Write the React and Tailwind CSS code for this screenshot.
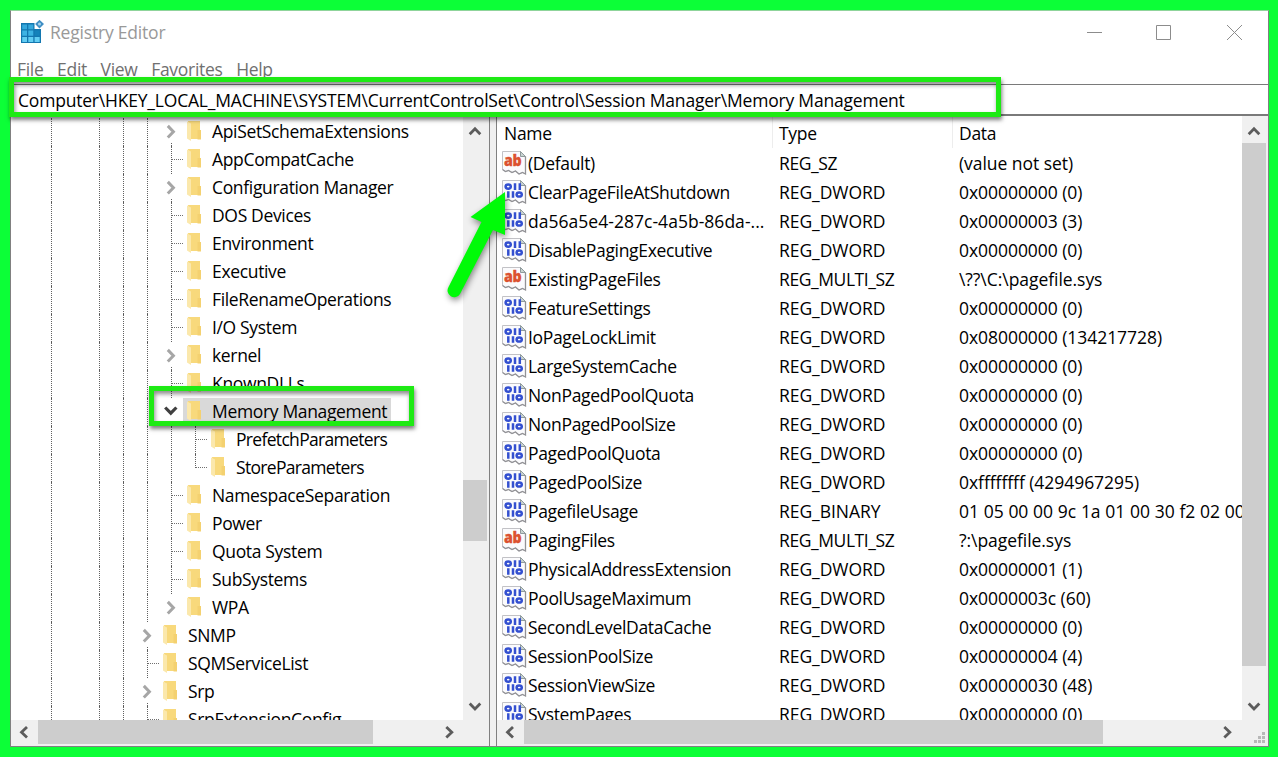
import React from 'react';

const TREE = [
  { name: 'ApiSetSchemaExtensions', level: 5, arrow: 'closed' },
  { name: 'AppCompatCache', level: 5 },
  { name: 'Configuration Manager', level: 5, arrow: 'closed' },
  { name: 'DOS Devices', level: 5 },
  { name: 'Environment', level: 5 },
  { name: 'Executive', level: 5 },
  { name: 'FileRenameOperations', level: 5 },
  { name: 'I/O System', level: 5 },
  { name: 'kernel', level: 5, arrow: 'closed' },
  { name: 'KnownDLLs', level: 5 },
  { name: 'Memory Management', level: 5, arrow: 'open', selected: true },
  { name: 'PrefetchParameters', level: 6 },
  { name: 'StoreParameters', level: 6, last: true },
  { name: 'NamespaceSeparation', level: 5 },
  { name: 'Power', level: 5 },
  { name: 'Quota System', level: 5 },
  { name: 'SubSystems', level: 5 },
  { name: 'WPA', level: 5, arrow: 'closed', last: true },
  { name: 'SNMP', level: 4, arrow: 'closed' },
  { name: 'SQMServiceList', level: 4 },
  { name: 'Srp', level: 4, arrow: 'closed' },
  { name: 'SrpExtensionConfig', level: 4 },
];

const VALUES = [
  ['(Default)', 'REG_SZ', '(value not set)'],
  ['ClearPageFileAtShutdown', 'REG_DWORD', '0x00000000 (0)'],
  ['da56a5e4-287c-4a5b-86da-...', 'REG_DWORD', '0x00000003 (3)'],
  ['DisablePagingExecutive', 'REG_DWORD', '0x00000000 (0)'],
  ['ExistingPageFiles', 'REG_MULTI_SZ', '\\??\\C:\\pagefile.sys'],
  ['FeatureSettings', 'REG_DWORD', '0x00000000 (0)'],
  ['IoPageLockLimit', 'REG_DWORD', '0x08000000 (134217728)'],
  ['LargeSystemCache', 'REG_DWORD', '0x00000000 (0)'],
  ['NonPagedPoolQuota', 'REG_DWORD', '0x00000000 (0)'],
  ['NonPagedPoolSize', 'REG_DWORD', '0x00000000 (0)'],
  ['PagedPoolQuota', 'REG_DWORD', '0x00000000 (0)'],
  ['PagedPoolSize', 'REG_DWORD', '0xffffffff (4294967295)'],
  ['PagefileUsage', 'REG_BINARY', '01 05 00 00 9c 1a 01 00 30 f2 02 00'],
  ['PagingFiles', 'REG_MULTI_SZ', '?:\\pagefile.sys'],
  ['PhysicalAddressExtension', 'REG_DWORD', '0x00000001 (1)'],
  ['PoolUsageMaximum', 'REG_DWORD', '0x0000003c (60)'],
  ['SecondLevelDataCache', 'REG_DWORD', '0x00000000 (0)'],
  ['SessionPoolSize', 'REG_DWORD', '0x00000004 (4)'],
  ['SessionViewSize', 'REG_DWORD', '0x00000030 (48)'],
  ['SystemPages', 'REG_DWORD', '0x00000000 (0)'],
];

const MENU = ['File', 'Edit', 'View', 'Favorites', 'Help'];

const FolderIcon = () => (
  <svg width="16" height="22" viewBox="0 0 16 22" className="shrink-0">
    <path d="M1 1H13V19H3Z" fill="#f8d97c" />
    <path d="M10.5 10H14V19.5H10.5Z" fill="#f4d170" />
    <path d="M0 1.5L4 3.5V21L0 18.5Z" fill="#fbe8ac" />
  </svg>
);

const AppIcon = () => (
  <svg width="24" height="26" viewBox="0 0 24 26">
    <path d="M1 3H14.5V9H21V23H1Z" fill="#1377b0" />
    <path d="M2.2 4.5H7V9.3H2.2ZM8.3 4.5H13.3V9.3H8.3Z" fill="#35a8dc" />
    <path d="M2.2 10.5H7V15.7H2.2ZM8.3 10.5H13.3V15.7H8.3Z" fill="#3db3e4" />
    <path d="M14.6 10.5H19.7V15.7H14.6Z" fill="#1482bb" />
    <path d="M2.2 17H7V22H2.2ZM8.3 17H13.3V22H8.3ZM14.6 17H19.7V22H14.6Z" fill="#62cdf3" />
    <path d="M19.5 -0.2L24 4.1L19.5 8.4L15.1 4.1Z" fill="#3f8ec4" />
    <circle cx="19.5" cy="4.1" r="1.5" fill="#a6d4ee" />
  </svg>
);

const ValueIcon = ({ text }) => (
  <svg width="26" height="26" viewBox="0 0 26 26" className="shrink-0">
    <path
      d="M0.5 1.5H18.5L23.5 6.5V24L20.5 22.5L17 24L13.5 21L10 22.5L6.5 20.5L3.5 21.5L0.5 19.5Z"
      fill="#fbfbfd"
      stroke="#c2c2c6"
      strokeWidth="1"
    />
    <path d="M18.5 1.5V6.5H23.5Z" fill="#c9d3d2" stroke="#8f9a9c" strokeWidth="1" />
    <path
      d="M23.5 6.5V24L20.5 22.5L17 24L13.5 21L10 22.5L6.5 20.5L3.5 21.5L0.5 19.5"
      fill="none"
      stroke="#929296"
      strokeWidth="1.3"
    />
    {text ? (
      <text
        x="2"
        y="15.7"
        textLength="17.5"
        lengthAdjust="spacingAndGlyphs"
        fontSize="16"
        fontWeight="800"
        fontFamily="Open Sans, sans-serif"
        fill="#dc5230"
        stroke="#dc5230"
        strokeWidth="0.3"
      >
        ab
      </text>
    ) : (
      <g fill="none" stroke="#3450d0" strokeWidth="2.5">
        <ellipse cx="6.2" cy="7.6" rx="2.6" ry="2.1" />
        <path d="M13 4.3V10.9M17.8 4.3V10.9" />
        <path d="M6.3 12.2V18.8M11 12.2V18.8" />
        <ellipse cx="17.2" cy="15.5" rx="2.6" ry="2.1" />
      </g>
    )}
  </svg>
);

const Chevron = ({ dir }) => {
  const paths = {
    up: 'M6.7 15.3L12 9.8L17.3 15.3',
    down: 'M6.7 9.5L12 15L17.3 9.5',
    left: 'M16 6.9L10.5 12.2L16 17.5',
    right: 'M9.3 6.9L14.8 12.2L9.3 17.5',
  };
  return (
    <svg width="24" height="24" viewBox="0 0 24 24" className="shrink-0">
      <path d={paths[dir]} fill="none" stroke="#5c5c5c" strokeWidth="2.8" />
    </svg>
  );
};

// One 24px wide column of the tree's dotted guides
const Guide = ({ branch, half }) => (
  <div className="w-6 shrink-0 pl-3">
    <div className={`border-l border-dotted border-[#606060] ${half ? 'h-[14px]' : 'h-7'}`}>
      {branch && (
        <div className="pt-[13px]">
          <div className="w-[11px] border-t border-dotted border-[#707070]" />
        </div>
      )}
    </div>
  </div>
);

const Expander = ({ open, last }) => (
  <div className="h-7 w-6 shrink-0">
    <svg width="24" height="25" viewBox="0 0 24 25" className="block">
      {open ? (
        <path d="M6.2 9.5L11.8 15.2L17.4 9.5" fill="none" stroke="#404040" strokeWidth="3.2" />
      ) : (
        <path d="M8.8 7.9L14.4 13.7L8.8 19.5" fill="none" stroke="#a6a6a6" strokeWidth="3" />
      )}
    </svg>
    {!last && <div className="ml-3 h-[3px] border-l border-dotted border-[#606060]" />}
  </div>
);

const TreeRow = ({ item }) => (
  <div className="flex h-7 shrink-0 pl-7">
    <Guide />
    <div className="w-6 shrink-0" />
    <Guide />
    <Guide />
    {item.level > 4 && <Guide />}
    {item.level > 5 && <Guide />}
    {item.arrow ? (
      <Expander open={item.arrow === 'open'} last={item.last} />
    ) : (
      <Guide branch half={item.last} />
    )}
    <div className={`flex h-7 items-center pr-1 ${item.selected ? 'bg-[#d9d9d9]' : ''}`}>
      <div className="flex w-[29px] shrink-0 pb-[2px] pl-1">
        <FolderIcon />
      </div>
      <span className={`-mt-0.5 whitespace-pre ${item.level > 5 ? 'tracking-[-0.68px]' : 'tracking-[-0.34px]'}`}>
        {item.name}
      </span>
    </div>
  </div>
);

const ValueRow = ({ value }) => {
  const [name, type, data] = value;
  const isText = type === 'REG_SZ' || type === 'REG_MULTI_SZ';
  return (
    <div className="flex h-[29px] shrink-0 items-center whitespace-pre">
      <div className="flex w-[282px] shrink-0 items-center pl-[5px]">
        <ValueIcon text={isText} />
        <span className={name.includes('-') ? 'tracking-[0.03px]' : 'tracking-[-0.33px]'}>{name}</span>
      </div>
      <div className={`w-[180px] shrink-0 ${isText ? 'tracking-[-0.42px]' : 'tracking-[-0.05px]'}`}>{type}</div>
      <div className={type === 'REG_BINARY' ? 'tracking-[-0.05px] [word-spacing:0.3px]' : 'tracking-[-0.05px]'}>{data}</div>
    </div>
  );
};

export default function App() {
  return (
    <div className="relative h-[757px] w-[1278px] overflow-hidden bg-[#0cff37] p-[10px] font-['Open_Sans',sans-serif] text-[17.5px] leading-7 tracking-[-0.3px] text-black">
      <div className="flex h-[737px] w-[1259px] flex-col border border-[#808080] border-t-[#8fd49b] bg-white">
        <div className="flex h-[44px] shrink-0 items-center pl-[9px]">
          <AppIcon />
          <span className="-mt-0.5 ml-[6px] tracking-[-0.2px] text-[#999]">Registry Editor</span>
          <svg width="160" height="20" viewBox="0 0 160 20" className="ml-auto mr-[23px]" fill="none" stroke="#8c8c8c">
            <path d="M2 9.5H17" />
            <path d="M71.5 2.5H85.5V16.5H71.5Z" />
            <path d="M142 2L157 17M157 2L142 17" />
          </svg>
        </div>
        <div className="flex h-[29px] shrink-0 gap-[13.6px] pl-[6px] text-[#707070]">
          {MENU.map((m) => (
            <span key={m}>{m}</span>
          ))}
        </div>
        <div className="flex h-8 shrink-0 items-center border-b-2 border-t border-[#7a7a7a] pl-[7px] tracking-[-0.2px]">
          Computer\HKEY_LOCAL_MACHINE\SYSTEM\CurrentControlSet\Control\Session Manager\Memory Management
        </div>

        <div className="flex min-h-0 flex-1 bg-[#f0f0f0]">
          <div className="flex w-[479px] shrink-0 flex-col border-r border-[#808080]">
            <div className="flex h-[604px]">
              <div className="flex w-[452px] flex-col overflow-hidden bg-white pt-[2px]">
                {TREE.map((item) => (
                  <TreeRow key={item.name} item={item} />
                ))}
              </div>
              <div className="flex w-6 flex-col pb-[2px] pt-[3px]">
                <Chevron dir="up" />
                <div className="mt-[337px] h-[61px] bg-[#cdcdcd]" />
                <div className="mt-auto">
                  <Chevron dir="down" />
                </div>
              </div>
            </div>
            <div className="flex h-6 items-center">
              <Chevron dir="left" />
              <div className="ml-[3px] h-6 w-[335px] bg-[#cdcdcd]" />
              <div className="ml-auto mr-[28px]">
                <Chevron dir="right" />
              </div>
            </div>
          </div>

          <div className="ml-[6px] flex flex-1 flex-col border-l border-[#808080]">
            <div className="flex h-[604px]">
              <div className="w-[745px] shrink-0 overflow-hidden bg-white">
                <div className="flex h-8 items-center">
                  <div className="h-full w-[276px] border-r border-[#ededed] pl-[7px] pt-[3px]">Name</div>
                  <div className="h-full w-[180px] border-r border-[#ededed] pl-[6px] pt-[3px]">Type</div>
                  <div className="h-full pl-[6px] pt-[3px]">Data</div>
                </div>
                {VALUES.map((v) => (
                  <ValueRow key={v[0]} value={v} />
                ))}
              </div>
              <div className="flex w-6 flex-col pb-[2px] pt-[3px]">
                <Chevron dir="up" />
                <div className="h-[523px] bg-[#cdcdcd]" />
                <div className="mt-auto">
                  <Chevron dir="down" />
                </div>
              </div>
            </div>
            <div className="flex h-6 items-center">
              <Chevron dir="left" />
              <div className="ml-[3px] h-6 w-[579px] bg-[#cdcdcd]" />
              <div className="ml-auto mr-[5px]">
                <Chevron dir="right" />
              </div>
              <svg width="24" height="24" viewBox="0 0 24 24" fill="#b8b8b8">
                <path d="M18 12h3v3h-3zM14 16h3v3h-3zM18 16h3v3h-3zM10 20h3v3h-3zM14 20h3v3h-3zM18 20h3v3h-3z" />
              </svg>
            </div>
          </div>
        </div>
      </div>

      {/* highlight frames and pointer laid over the window */}
      <div className="absolute left-[9px] top-[77px] h-[40px] w-[992px] border-[5px] border-[#1eea14] shadow-[1px_3px_4px_rgba(0,0,0,0.5),inset_1px_3px_4px_rgba(0,0,0,0.45)]" />
      <div className="absolute left-[149px] top-[386px] h-[40px] w-[265px] border-[5px] border-[#1eea14] shadow-[1px_3px_4px_rgba(0,0,0,0.5),inset_1px_3px_4px_rgba(0,0,0,0.45)]" />
      <svg className="absolute left-[440px] top-[180px] drop-shadow-[1px_3px_3px_rgba(0,0,0,0.45)]" width="80" height="130" viewBox="0 0 80 130">
        <path d="M65 12L30.5 37L41.5 42L8.5 107A6.5 6.5 0 0 0 20 114L53 50L65 55Z" fill="#00fb08" />
      </svg>
    </div>
  );
}
